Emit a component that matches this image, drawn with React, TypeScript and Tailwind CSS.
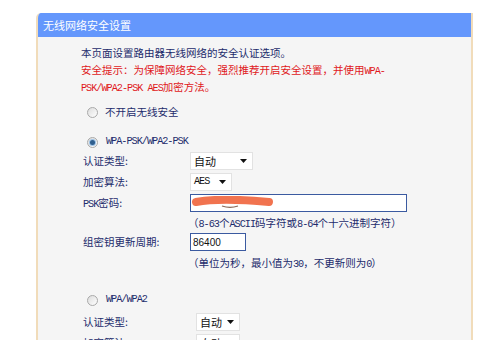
import React from 'react';

const cjk = "font-['Noto_Sans_CJK_SC',sans-serif]";
const mono = "font-['Liberation_Mono','Noto_Sans_CJK_SC',monospace] text-[10.2px] tracking-[-1px] leading-none";

const Radio = ({ checked }: { checked?: boolean }) => (
  <span className="relative inline-flex w-[11px] h-[11px] rounded-full border border-[#a9a9a9] bg-gradient-to-br from-[#dcdcdc] to-white items-center justify-center">
    {checked && <span className="w-[5px] h-[5px] rounded-full bg-[#2f5f8f] ring-1 ring-[#9ec3e6]" />}
  </span>
);

const Select = ({ value, width, latin }: { value: string; width: string; latin?: boolean }) => (
  <div className={`flex items-center justify-between h-[18px] ${width} bg-white border border-[#e2e2e2] pl-[3px] pr-[5px]`}>
    <span className={latin ? mono + ' text-[#111]' : 'text-[11px] text-[#111]'}>{value}</span>
    <svg width="7" height="4" viewBox="0 0 7 4"><path d="M0 0h7L3.5 4z" fill="#111" /></svg>
  </div>
);

const Label = ({ children, w = 'w-[107px]' }: { children: React.ReactNode; w?: string }) => (
  <span className={`${w} shrink-0`}>{children}</span>
);

export default function App() {
  return (
    <div className={`w-[500px] h-[340px] overflow-hidden bg-white pt-[13px] pl-[36px] ${cjk}`}>
      <div className="w-[437px] h-[327px] flex flex-col rounded-tl-[5px] overflow-hidden border-l-2 border-r-2 border-[#f1dcba]">
        <div className="h-[24px] shrink-0 bg-[#6497fc] text-white text-[11px] leading-[24px] pl-[5px]">无线网络安全设置</div>
        <div className="flex-1 bg-[#f5f5f5] pl-[43px] text-[10.5px] text-[#1d2c6c]">
          <div className="pt-[7px]">
            <div className="h-[17px] leading-[17px]">本页面设置路由器无线网络的安全认证选项。</div>
            <div className="h-[17px] leading-[17px] text-[#e0181b]">安全提示：为保障网络安全，强烈推荐开启安全设置，并使用<span className={mono}>WPA-</span></div>
            <div className="h-[17px] leading-[17px] text-[#e0181b]"><span className={mono}>PSK/WPA2-PSK AES</span>加密方法。</div>
          </div>
          <div className="mt-[7px] h-[20px] flex items-center pl-[6px] gap-[7px]">
            <Radio />
            <span>不开启无线安全</span>
          </div>
          <div className="mt-[10px] h-[20px] flex items-center pl-[6px] gap-[8px]">
            <Radio checked />
            <span className={mono}>WPA-PSK/WPA2-PSK</span>
          </div>
          <div className="pl-[2px]">
            <div className="h-[18px] flex items-center">
              <Label>认证类型:</Label>
              <Select value="自动" width="w-[63px]" />
            </div>
            <div className="mt-[3px] h-[18px] flex items-center">
              <Label>加密算法:</Label>
              <Select value="AES" width="w-[42px]" latin />
            </div>
            <div className="mt-[3px] h-[18px] flex items-center">
              <Label><span className={mono}>PSK</span>密码:</Label>
              <div className="relative w-[217px] h-[18px] bg-white border border-[#3b5aa0]">
                <svg className="absolute left-[1px] top-[1px]" width="82" height="14" viewBox="0 0 82 14">
                  <path d="M4 6 C 20 3, 45 3, 77 6" stroke="#f0643c" strokeWidth="8" strokeLinecap="round" fill="none" opacity="0.9" />
                  <path d="M30 10 C 36 12, 40 12, 46 10" stroke="#8a6a5a" strokeWidth="1.2" fill="none" />
                </svg>
              </div>
            </div>
            <div className="mt-[3px] h-[16px] leading-[16px] pl-[105px]">
              <span>（<span className={mono}>8-63</span>个<span className={mono}>ASCII</span>码字符或<span className={mono}>8-64</span>个十六进制字符）</span>
            </div>
            <div className="mt-[2px] h-[18px] flex items-center">
              <Label>组密钥更新周期:</Label>
              <div className="w-[56px] h-[18px] bg-white border border-[#3b5aa0] flex items-center pl-[2px] font-['Liberation_Sans',sans-serif] text-[10px] text-[#111]">86400</div>
            </div>
            <div className="mt-[4px] h-[16px] leading-[16px] pl-[105px]">
              <span>（单位为秒，最小值为<span className={mono}>30</span>，不更新则为<span className={mono}>0</span>）</span>
            </div>
          </div>
          <div className="mt-[19px] h-[20px] flex items-center pl-[6px] gap-[8px]">
            <Radio />
            <span className={mono}>WPA/WPA2</span>
          </div>
          <div className="pl-[2px]">
            <div className="mt-[3px] h-[18px] flex items-center">
              <Label w="w-[113px]">认证类型:</Label>
              <Select value="自动" width="w-[44px]" />
            </div>
            <div className="mt-[3px] h-[18px] flex items-center">
              <Label w="w-[113px]">加密算法:</Label>
              <Select value="自动" width="w-[44px]" />
            </div>
          </div>
        </div>
      </div>
    </div>
  );
}
